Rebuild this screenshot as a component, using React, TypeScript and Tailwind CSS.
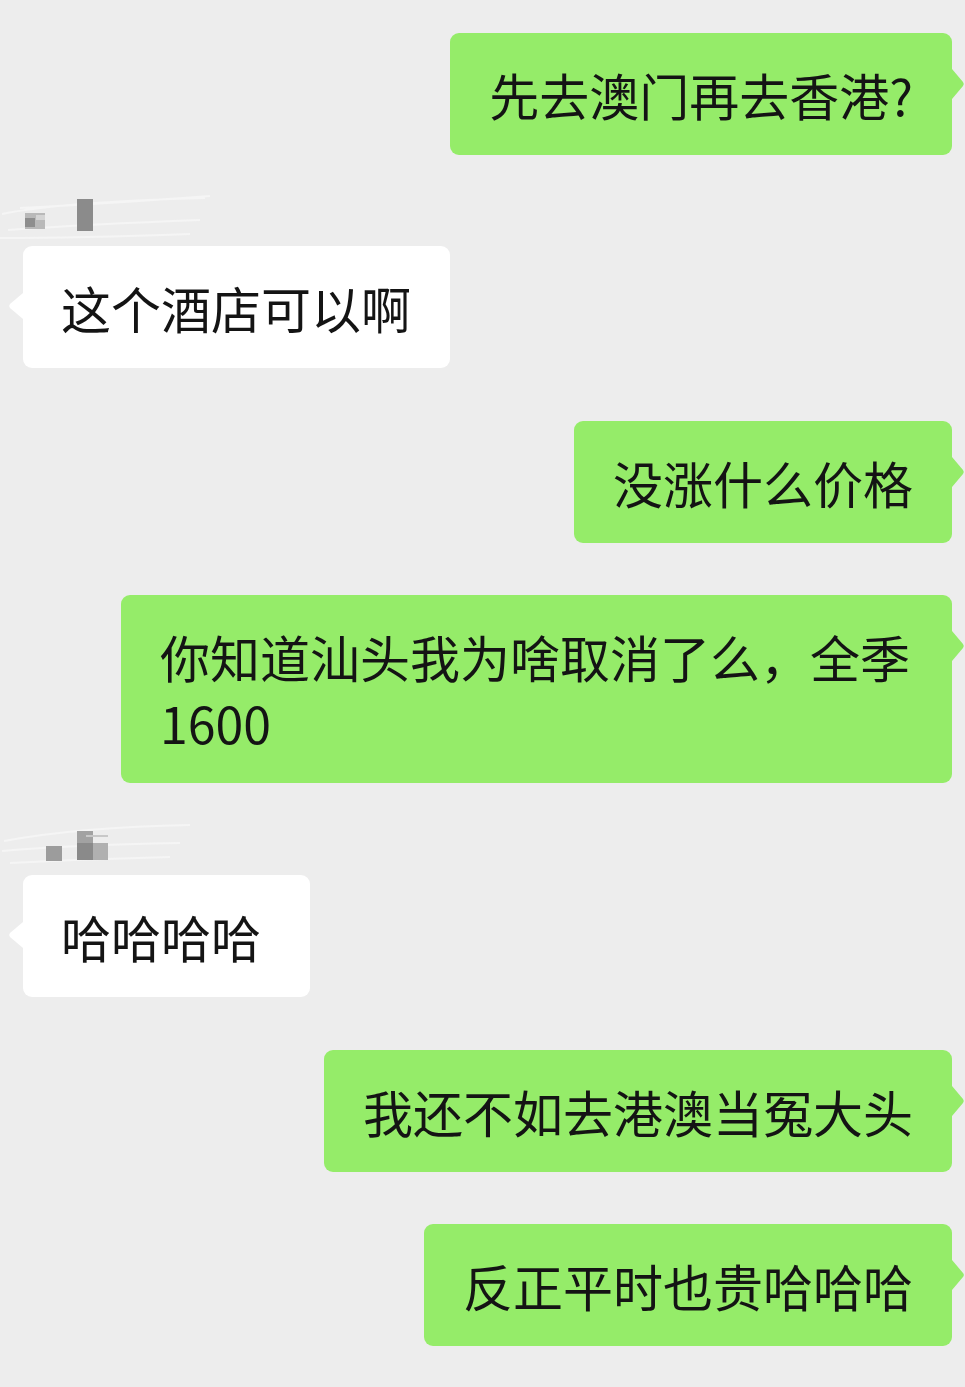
import React from "react";

const FONT = '"Noto Sans CJK SC", "Noto Sans", sans-serif';

function RightTail() {
  return (
    <svg
      className="absolute left-full top-[36px]"
      width="13"
      height="30"
      viewBox="0 0 13 30"
    >
      <path d="M0 0 L11 13 Q12.6 15 11 17 L0 30 Z" fill="#95ec69" />
    </svg>
  );
}

function LeftTail() {
  return (
    <svg
      className="absolute right-full top-[47px]"
      width="15"
      height="26"
      viewBox="0 0 15 26"
    >
      <path d="M15 0 L2 11 Q0.3 13 2 15 L15 26 Z" fill="#ffffff" />
    </svg>
  );
}

function Out({
  children,
  className = "",
}: {
  children: React.ReactNode;
  className?: string;
}) {
  return (
    <div className={"self-end mr-[13px] " + className}>
      <div className="relative bg-[#95ec69] rounded-[9px] pl-[39px] pr-[39px] py-[28px] text-[50px] leading-[66px] text-[#141414] max-w-[831px]">
        {children}
        <RightTail />
      </div>
    </div>
  );
}

function Name({ variant }: { variant: 1 | 2 }) {
  return (
    <svg width="230" height="52" viewBox="0 0 230 52" className="block">
      {variant === 1 ? (
        <>
          <path
            d="M2 20 Q60 8 205 4 M8 36 Q90 30 200 26 M0 44 Q80 44 190 40 M20 14 Q100 10 210 2"
            stroke="#f5f5f5"
            strokeWidth="2"
            fill="none"
          />
          <rect x="25" y="19" width="20" height="16" fill="#b9b9b9" />
          <rect x="25" y="24" width="10" height="9" fill="#8e8e8e" />
          <rect x="36" y="21" width="9" height="5" fill="#d4d4d4" />
          <rect x="77" y="5" width="16" height="32" fill="#8b8b8b" />
        </>
      ) : (
        <>
          <path
            d="M4 18 Q80 4 190 2 M10 40 Q90 36 170 34 M2 28 Q70 22 180 20"
            stroke="#f5f5f5"
            strokeWidth="2"
            fill="none"
          />
          <rect x="46" y="23" width="16" height="15" fill="#9c9c9c" />
          <rect x="77" y="8" width="16" height="12" fill="#a2a2a2" />
          <rect x="77" y="20" width="16" height="17" fill="#8a8a8a" />
          <rect x="93" y="20" width="15" height="17" fill="#b0b0b0" />
          <rect x="86" y="12" width="22" height="2" fill="#c8c8c8" />
        </>
      )}
    </svg>
  );
}

function In({
  children,
  variant,
  className = "",
  padRight = "pr-[39px]",
}: {
  children: React.ReactNode;
  variant: 1 | 2;
  className?: string;
  padRight?: string;
}) {
  return (
    <div className={"self-start flex flex-col " + className}>
      <Name variant={variant} />
      <div className="ml-[23px]">
        <div
          className={
            "relative bg-white rounded-[9px] pl-[38px] py-[28px] text-[50px] leading-[66px] text-[#141414] " +
            padRight
          }
        >
          {children}
          <LeftTail />
        </div>
      </div>
    </div>
  );
}

export default function App() {
  return (
    <div
      className="w-[965px] min-h-[1387px] bg-[#ededed] flex flex-col pt-[33px] overflow-hidden"
      style={{ fontFamily: FONT }}
    >
      <Out>先去澳门再去香港?</Out>
      <In variant={1} className="mt-[39px]">
        这个酒店可以啊
      </In>
      <Out className="mt-[53px]">没涨什么价格</Out>
      <Out className="mt-[52px]">你知道汕头我为啥取消了么，全季1600</Out>
      <In variant={2} className="mt-[40px]" padRight="pr-[49px]">
        哈哈哈哈
      </In>
      <Out className="mt-[53px]">我还不如去港澳当冤大头</Out>
      <Out className="mt-[52px]">反正平时也贵哈哈哈</Out>
    </div>
  );
}
